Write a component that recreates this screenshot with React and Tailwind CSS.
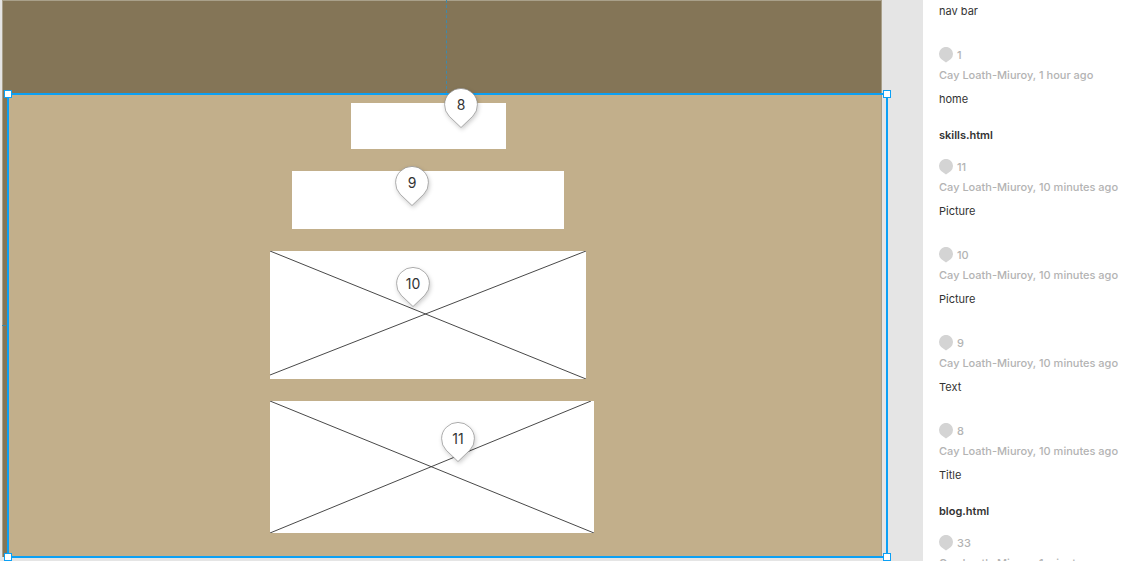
import React from "react";

const sections = [
  {
    title: null,
    lead: "nav bar",
    comments: [{ id: 1, when: "1 hour ago", text: "home" }],
  },
  {
    title: "skills.html",
    comments: [
      { id: 11, when: "10 minutes ago", text: "Picture" },
      { id: 10, when: "10 minutes ago", text: "Picture" },
      { id: 9, when: "10 minutes ago", text: "Text" },
      { id: 8, when: "10 minutes ago", text: "Title" },
    ],
  },
  {
    title: "blog.html",
    comments: [{ id: 33, when: "1 minute ago", text: "" }],
  },
];

function Pin({ label, place }) {
  return (
    <button
      type="button"
      aria-label={`Comment ${label}`}
      className={`absolute h-10 w-9 text-sm text-[#333] ${place}`}
    >
      <svg
        viewBox="0 0 36 40"
        className="absolute inset-0 h-10 w-9 overflow-visible drop-shadow-[1px_2px_2px_rgba(0,0,0,0.2)]"
        aria-hidden="true"
      >
        <path
          d="M18 39.5 6.2 28.2A16.4 16.4 0 1 1 29.8 28.2Z"
          fill="#fff"
          stroke="#8c8c8c"
          strokeWidth="0.7"
        />
      </svg>
      <span className="relative block h-10 leading-[34px]">{label}</span>
    </button>
  );
}

function Handle({ place }) {
  return <span className={`absolute size-2 border border-[#0ba0f5] bg-white ${place}`} />;
}

function Canvas() {
  return (
    <main className="relative min-w-0 flex-1 overflow-hidden bg-[#e5e5e5]">
      <div className="absolute inset-y-0 left-[2px] w-[880px] border-x border-t border-[#a9a08a] bg-[#847557]" />
      <div className="absolute left-[7px] top-[94px] h-[463px] w-[874px] bg-[#c2af8b]" />
      <div className="absolute left-[446px] top-0 h-[94px] border-l border-dashed border-[#3f88a8]" />
      <div className="absolute left-[2px] top-[325px] w-1 border-t border-[#3f88a8]" />
      <div className="absolute left-[351px] top-[103px] h-[46px] w-[155px] bg-white" />
      <div className="absolute left-[292px] top-[171px] h-[58px] w-[272px] bg-white" />
      <svg viewBox="0 0 316 128" className="absolute left-[270px] top-[251px] h-[128px] w-[316px] bg-white" aria-hidden="true">
        <path d="M0 0 316 128M0 124 316 0" stroke="#333" strokeWidth="0.9" />
      </svg>
      <svg viewBox="0 0 324 132" className="absolute left-[270px] top-[401px] h-[132px] w-[324px] bg-white" aria-hidden="true">
        <path d="M0 0 324 132M0 132 321 0" stroke="#333" strokeWidth="0.9" />
      </svg>
      <div className="absolute left-0 top-[557px] h-1 w-[887px] bg-[#e5e5e5]" />
      <div className="absolute left-[7px] top-[93px] h-[465px] w-[881px] border-2 border-[#0ba0f5]">
        <Handle place="-left-[5px] -top-[5px]" />
        <Handle place="-right-[5px] -top-[5px]" />
        <Handle place="-bottom-[5px] -left-[5px]" />
        <Handle place="-bottom-[5px] -right-[5px]" />
      </div>
      <Pin label="8" place="left-[443px] top-[88px]" />
      <Pin label="9" place="left-[394px] top-[166px]" />
      <Pin label="10" place="left-[395px] top-[267px]" />
      <Pin label="11" place="left-[440px] top-[422px]" />
    </main>
  );
}

function Comment({ id, when, text }) {
  return (
    <li>
      <div className="flex h-5 items-center gap-1 font-medium text-[#b3b3b3]">
        <svg viewBox="0 0 14 16" className="h-4 w-3.5" aria-hidden="true">
          <path d="M7 15.6 2.1 11.9A7 7 0 1 1 11.9 11.9Z" fill="#d4d4d4" />
        </svg>
        <span>{id}</span>
      </div>
      <p className="font-medium text-[#b3b3b3]">Cay Loath-Miuroy, {when}</p>
      <p className="mt-1">{text}</p>
    </li>
  );
}

function Sidebar() {
  return (
    <aside className="flex w-[223px] shrink-0 flex-col gap-4 overflow-hidden whitespace-nowrap bg-white pl-4 pt-px text-[11px] leading-5 text-[#333]">
      {sections.map((section) => (
        <section key={section.title ?? "first"}>
          {section.title && <h2 className="mb-3 font-semibold">{section.title}</h2>}
          {section.lead && <p className="mb-6">{section.lead}</p>}
          <ul className="flex flex-col gap-6">
            {section.comments.map((comment) => (
              <Comment key={comment.id} {...comment} />
            ))}
          </ul>
        </section>
      ))}
    </aside>
  );
}

export default function App() {
  return (
    <div className="flex h-screen overflow-hidden font-['Inter',sans-serif]">
      <Canvas />
      <Sidebar />
    </div>
  );
}
